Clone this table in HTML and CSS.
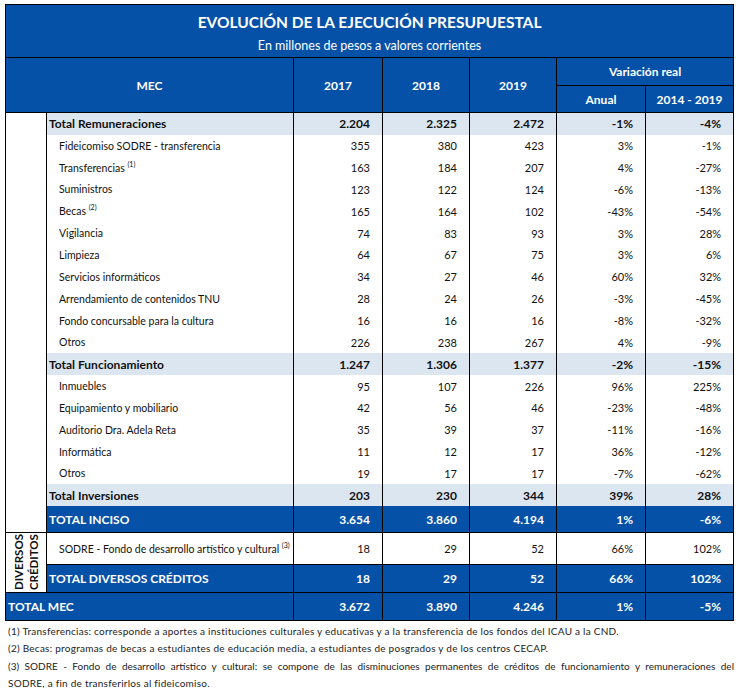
FILE: index.html
```html
<!DOCTYPE html>
<html lang="es">
<head>
<meta charset="utf-8">
<link rel="stylesheet" href="styles.css">
</head>
<body>
<div class="page">
<table class="budget">
<colgroup>
<col class="c-side"><col class="c-lbl"><col class="c-y1"><col class="c-y2"><col class="c-y3"><col class="c-v1"><col class="c-v2">
</colgroup>
<thead>
<tr class="r-title"><th colspan="7">EVOLUCIÓN DE LA EJECUCIÓN PRESUPUESTAL</th></tr>
<tr class="r-sub"><th colspan="7">En millones de pesos a valores corrientes</th></tr>
<tr class="r-h1"><th colspan="2" rowspan="2">MEC</th><th rowspan="2">2017</th><th rowspan="2">2018</th><th rowspan="2">2019</th><th colspan="2">Variación real</th></tr>
<tr class="r-h2"><th>Anual</th><th>2014 - 2019</th></tr>
</thead>
<tbody>
<tr class="tot first"><td class="side" rowspan="19"></td><td class="lbl">Total Remuneraciones</td><td>2.204</td><td>2.325</td><td>2.472</td><td>-1%</td><td>-4%</td></tr>
<tr><td class="lbl sub">Fideicomiso SODRE - transferencia</td><td>355</td><td>380</td><td>423</td><td>3%</td><td>-1%</td></tr>
<tr><td class="lbl sub">Transferencias <sup class="fn">(1)</sup></td><td>163</td><td>184</td><td>207</td><td>4%</td><td>-27%</td></tr>
<tr><td class="lbl sub">Suministros</td><td>123</td><td>122</td><td>124</td><td>-6%</td><td>-13%</td></tr>
<tr><td class="lbl sub">Becas <sup class="fn">(2)</sup></td><td>165</td><td>164</td><td>102</td><td>-43%</td><td>-54%</td></tr>
<tr><td class="lbl sub">Vigilancia</td><td>74</td><td>83</td><td>93</td><td>3%</td><td>28%</td></tr>
<tr><td class="lbl sub">Limpieza</td><td>64</td><td>67</td><td>75</td><td>3%</td><td>6%</td></tr>
<tr><td class="lbl sub">Servicios informáticos</td><td>34</td><td>27</td><td>46</td><td>60%</td><td>32%</td></tr>
<tr><td class="lbl sub">Arrendamiento de contenidos TNU</td><td>28</td><td>24</td><td>26</td><td>-3%</td><td>-45%</td></tr>
<tr><td class="lbl sub">Fondo concursable para la cultura</td><td>16</td><td>16</td><td>16</td><td>-8%</td><td>-32%</td></tr>
<tr><td class="lbl sub">Otros</td><td>226</td><td>238</td><td>267</td><td>4%</td><td>-9%</td></tr>
<tr class="tot"><td class="lbl">Total Funcionamiento</td><td>1.247</td><td>1.306</td><td>1.377</td><td>-2%</td><td>-15%</td></tr>
<tr><td class="lbl sub">Inmuebles</td><td>95</td><td>107</td><td>226</td><td>96%</td><td>225%</td></tr>
<tr><td class="lbl sub">Equipamiento y mobiliario</td><td>42</td><td>56</td><td>46</td><td>-23%</td><td>-48%</td></tr>
<tr><td class="lbl sub">Auditorio Dra. Adela Reta</td><td>35</td><td>39</td><td>37</td><td>-11%</td><td>-16%</td></tr>
<tr><td class="lbl sub">Informática</td><td>11</td><td>12</td><td>17</td><td>36%</td><td>-12%</td></tr>
<tr><td class="lbl sub">Otros</td><td>19</td><td>17</td><td>17</td><td>-7%</td><td>-62%</td></tr>
<tr class="tot"><td class="lbl">Total Inversiones</td><td>203</td><td>230</td><td>344</td><td>39%</td><td>28%</td></tr>
<tr class="blue inciso"><td class="lbl">TOTAL INCISO</td><td>3.654</td><td>3.860</td><td>4.194</td><td>1%</td><td>-6%</td></tr>
<tr class="sodre"><td class="side vert" rowspan="2"><span class="vtext">DIVERSOS<br>CRÉDITOS</span></td><td class="lbl sub">SODRE - Fondo de desarrollo artístico y cultural <sup class="fn">(3)</sup></td><td>18</td><td>29</td><td>52</td><td>66%</td><td>102%</td></tr>
<tr class="blue diversos"><td class="lbl">TOTAL DIVERSOS CRÉDITOS</td><td>18</td><td>29</td><td>52</td><td>66%</td><td>102%</td></tr>
<tr class="blue mec"><td class="lbl mec-lbl" colspan="2">TOTAL MEC</td><td>3.672</td><td>3.890</td><td>4.246</td><td>1%</td><td>-5%</td></tr>
</tbody>
</table>
<div class="notes">
<p>(1) Transferencias: corresponde a aportes a instituciones culturales y educativas y a la transferencia de los fondos del ICAU a la CND.</p>
<p>(2) Becas: programas de becas a estudiantes de educación media, a estudiantes de posgrados y de los centros CECAP.</p>
<p class="just">(3) SODRE - Fondo de desarrollo artístico y cultural: se compone de las disminuciones permanentes de créditos de funcionamiento y remuneraciones del</p>
<p>SODRE, a fin de transferirlos al fideicomiso.</p>
</div>
</div>
</body>
</html>
```

FILE: styles.css
```css
body {
  margin: 0;
  background: #fff;
  font-family: Lato, "Liberation Sans", sans-serif;
  color: #111;
}
.page {
  padding: 4px 0 0 5px;
}
.budget {
  border-collapse: collapse;
  table-layout: fixed;
  width: 729px;
  border: 1px solid #000;
}
.c-side { width: 41px; }
.c-lbl { width: 247px; }
.c-y1 { width: 89px; }
.c-y2 { width: 87px; }
.c-y3 { width: 87px; }
.c-v1 { width: 89px; }
.c-v2 { width: 88px; }

.budget th {
  background: #0551a7;
  color: #fff;
  font-weight: 700;
  padding: 0;
  text-align: center;
}
.r-title th {
  height: 31px;
  font-size: 15.5px;
  vertical-align: middle;
  padding-top: 1px;
}
.r-sub th {
  height: 19px;
  font-size: 12.5px;
  font-weight: 400;
  vertical-align: top;
  padding-top: 1px;
}
.r-h1 th, .r-h2 th {
  border: 1px solid #000;
  font-size: 12px;
  height: 27px;
}
.r-h2 th {
  height: 26px;
}
.budget td {
  padding: 0 12px 0 0;
  height: 21.85px;
  font-size: 11px;
  text-align: right;
  border-left: 1px solid #000;
  border-right: 1px solid #000;
  white-space: nowrap;
}
.budget td.lbl {
  text-align: left;
  padding: 0 0 0 2px;
}
.budget td.sub {
  padding-left: 12px;
  font-size: 10.5px;
}
.budget td.side {
  padding: 0;
  background: #fff;
}
tr.first td { border-top: 1px solid #000; }
tr.tot td {
  background: #dce6f1;
  font-weight: 700;
  font-size: 12px;
}
tr.tot td.side { background: #fff; }
tr.blue td {
  background: #0551a7;
  color: #fff;
  font-weight: 700;
  font-size: 12px;
}
tr.inciso td { height: 26px; border-bottom: 1px solid #000; }
tr.inciso td.side { background: #fff; }
tr.sodre td { height: 31px; border-top: 1px solid #000; }
tr.diversos td { height: 27px; border-top: 1px solid #000; }
tr.mec td { height: 27px; border-top: 1px solid #000; }
td.mec-lbl { padding-left: 3px; font-size: 13px; }
td.vert {
  border-top: 1px solid #000;
  border-bottom: 1px solid #000;
  text-align: center;
}
.vtext {
  display: inline-block;
  writing-mode: vertical-rl;
  transform: rotate(180deg);
  font-size: 11.5px;
  font-weight: 700;
  line-height: 15px;
  color: #111;
}
.fn {
  font-size: 7px;
  vertical-align: 5px;
  line-height: 0;
}
.notes {
  width: 726px;
  padding: 2px 0 0 3px;
  font-size: 10px;
  letter-spacing: 0.25px;
  color: #222;
}
.notes p {
  margin: 0;
  line-height: 17.3px;
}
.notes p.just {
  text-align: justify;
  text-align-last: justify;
  letter-spacing: 0;
}
```
